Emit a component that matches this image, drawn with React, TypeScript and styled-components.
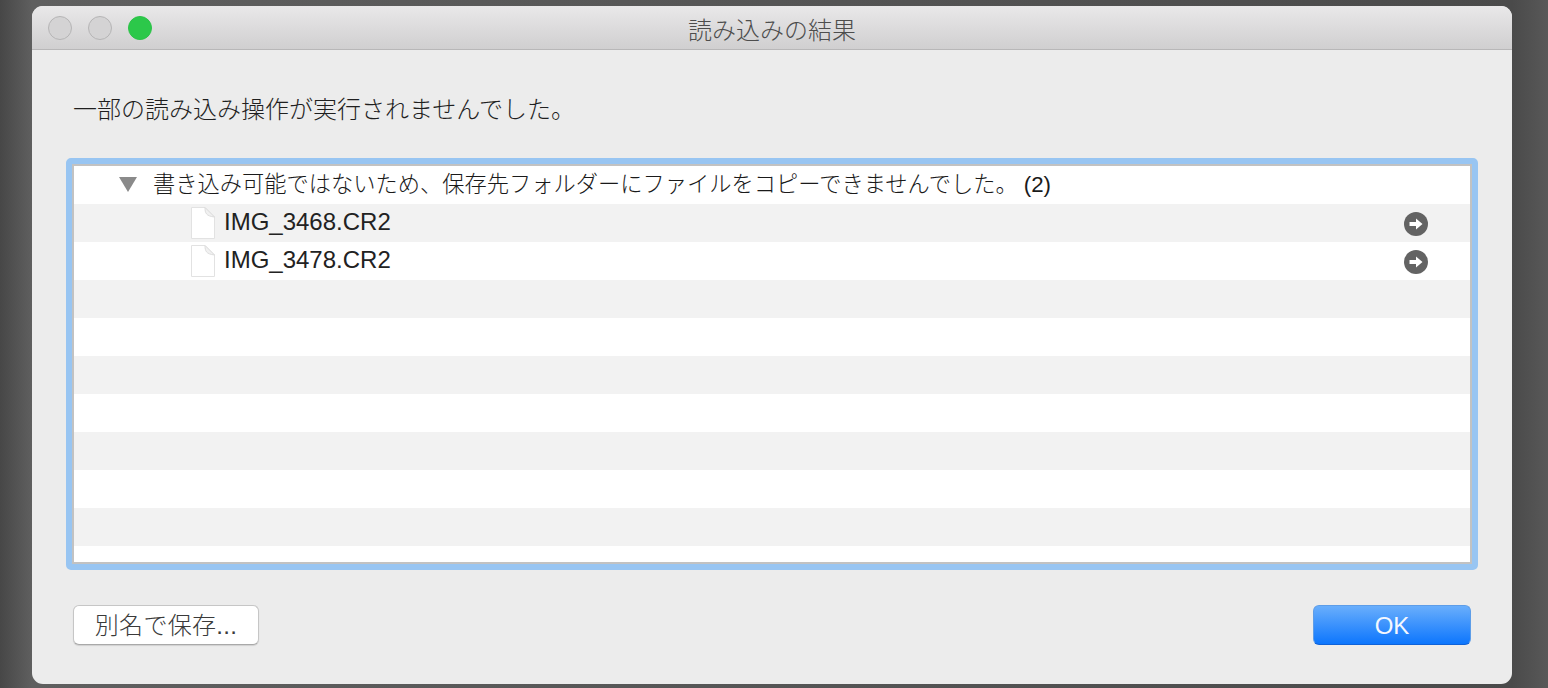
import React from "react";
import styled, { createGlobalStyle } from "styled-components";

const Global = createGlobalStyle`
  html, body { margin: 0; padding: 0; }
  body { font-family: "Liberation Sans", "Noto Sans CJK JP", sans-serif; }
`;

const Desktop = styled.div`
  width: 1548px;
  height: 688px;
  box-sizing: border-box;
  padding: 6px 36px 4px 32px;
  overflow: hidden;
  background: linear-gradient(90deg, #474747 0, #5f5f5f 32px, #555 50%, #4a4a4a 1512px, #585858 100%);
`;

const Window = styled.div`
  height: 678px;
  display: flex;
  flex-direction: column;
  border-radius: 11px;
  overflow: hidden;
  background: #ececec;
`;

const TitleBar = styled.header`
  position: relative;
  flex: 0 0 44px;
  box-sizing: border-box;
  display: flex;
  align-items: center;
  justify-content: center;
  padding-top: 1px;
  background: linear-gradient(180deg, #e9e8e9 0, #d0cfd0 100%);
  border-bottom: 1px solid #b8b7b8;
  font-size: 24px;
  font-weight: 300;
  color: #4d4d4d;
`;

const Lights = styled.div`
  position: absolute;
  left: 16px;
  top: 10px;
  display: flex;
  gap: 16px;
`;

const Light = styled.span<{ $on?: boolean }>`
  width: 24px;
  height: 24px;
  box-sizing: border-box;
  border-radius: 50%;
  background: ${(p) => (p.$on ? "#2cc84a" : "#d4d3d4")};
  border: 1px solid ${(p) => (p.$on ? "#2cc248" : "#b5b4b5")};
`;

const Body = styled.main`
  flex: 1;
  display: flex;
  flex-direction: column;
  padding: 0 34px;
`;

const Message = styled.p`
  margin: 0;
  padding: 43px 0 0 7px;
  font-size: 24px;
  font-weight: 300;
  line-height: 34px;
  height: 34px;
  color: #1f1f1f;
`;

const Table = styled.div`
  margin-top: 31px;
  height: 412px;
  box-sizing: border-box;
  border: 6px solid #98c5f2;
  border-radius: 5px;
  background: #fff;
  display: flex;
`;

const Rows = styled.div`
  flex: 1;
  border: 2px solid #c2c2c2;
  overflow: hidden;
  background: #fff;
`;

const Row = styled.div<{ $alt?: boolean; $indent?: number }>`
  height: 38px;
  display: flex;
  align-items: center;
  box-sizing: border-box;
  padding-left: ${(p) => p.$indent ?? 0}px;
  background: ${(p) => (p.$alt ? "#f2f2f2" : "#fff")};
`;

const Disclosure = styled.svg`
  width: 18px;
  height: 15px;
  margin-right: 16px;
  margin-top: -2px;
  flex: none;
`;

const GroupLabel = styled.span`
  font-size: 22.25px;
  font-weight: 300;
  line-height: 30px;
  color: #1a1a1a;
  white-space: nowrap;
`;

const FileName = styled.span`
  flex: 1;
  margin-left: 8px;
  margin-top: -2px;
  font-size: 24px;
  color: #222;
  white-space: nowrap;
`;

const Jump = styled.svg`
  width: 24px;
  height: 24px;
  margin-right: 42px;
  margin-top: 2px;
  flex: none;
`;

const Footer = styled.footer`
  display: flex;
  justify-content: space-between;
  align-items: flex-start;
  margin-top: 35px;
  padding: 0 7px;
`;

const SaveButton = styled.button`
  width: 186px;
  height: 40px;
  padding: 0 0 3px;
  border: 1px solid #c6c6c6;
  border-bottom-color: #a9a9a9;
  border-radius: 6px;
  background: #fff;
  box-shadow: 0 1px 1px rgba(0, 0, 0, 0.12);
  font: inherit;
  font-size: 24px;
  font-weight: 300;
  letter-spacing: 0.3px;
  color: #3a3a3a;
`;

const OkButton = styled.button`
  width: 158px;
  height: 40px;
  padding: 1px 0 0;
  border: 1px solid #5d9de8;
  border-bottom-color: #0f62d8;
  border-radius: 6px;
  background: linear-gradient(180deg, #69aefc 0, #0d76fd 100%);
  font: inherit;
  font-size: 24px;
  color: #f4f8ff;
`;

const FileIcon = () => (
  <svg width="28" height="34" viewBox="0 0 28 34" style={{ flex: "none" }}>
    <path d="M3.5 1.5H17L26.5 11V32.5H3.5Z" fill="#fff" stroke="#e2e2e2" strokeWidth="1" />
    <path d="M17 1.5C17 7 18 10 26.5 11Z" fill="#f1f1f1" stroke="#dcdcdc" strokeWidth="1" />
  </svg>
);

const JumpIcon = () => (
  <Jump viewBox="0 0 24 24">
    <circle cx="12" cy="12" r="12" fill="#636363" />
    <path d="M5.5 10H12V6.5L18.5 12L12 17.5V14H5.5Z" fill="#fff" />
  </Jump>
);

const files = ["IMG_3468.CR2", "IMG_3478.CR2"];

export default function App() {
  return (
    <>
      <Global />
      <Desktop>
        <Window>
          <TitleBar>
            <Lights>
              <Light />
              <Light />
              <Light $on />
            </Lights>
            読み込みの結果
          </TitleBar>
          <Body>
            <Message>一部の読み込み操作が実行されませんでした。</Message>
            <Table>
              <Rows>
                <Row $indent={45}>
                  <Disclosure viewBox="0 0 18 15">
                    <path d="M0 0H18L9 15Z" fill="#8a8a8a" />
                  </Disclosure>
                  <GroupLabel>書き込み可能ではないため、保存先フォルダーにファイルをコピーできませんでした。 (2)</GroupLabel>
                </Row>
                {files.map((name, i) => (
                  <Row key={name} $alt={i === 0} $indent={114}>
                    <FileIcon />
                    <FileName>{name}</FileName>
                    <JumpIcon />
                  </Row>
                ))}
                {Array.from({ length: 8 }, (_, i) => (
                  <Row key={i} $alt={i % 2 === 0} />
                ))}
              </Rows>
            </Table>
            <Footer>
              <SaveButton>別名で保存...</SaveButton>
              <OkButton>OK</OkButton>
            </Footer>
          </Body>
        </Window>
      </Desktop>
    </>
  );
}
